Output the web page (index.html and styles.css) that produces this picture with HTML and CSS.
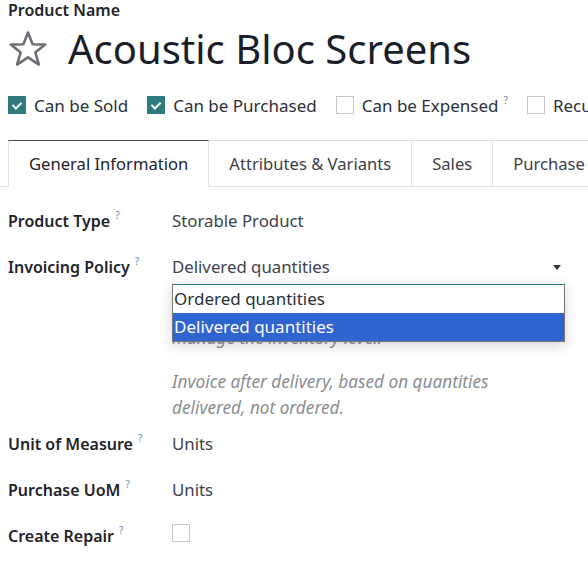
FILE: index.html
```html
<!DOCTYPE html>
<html lang="en">
<head>
    <meta charset="UTF-8">
    <meta name="viewport" content="width=device-width, initial-scale=1.0">
    <title>Acoustic Bloc Screens</title>
    <link rel="stylesheet" href="styles.css">
</head>
<body>
    <div class="sheet">
        <div class="title-block">
            <label class="name-label">Product Name</label>
            <div class="title-row">
                <svg class="star" width="40" height="38" viewBox="0 0 40 38">
                    <polygon points="20,2.5 24.6,14.2 37.2,14.6 27.3,22.4 30.9,34.6 20,27.4 9.1,34.6 12.7,22.4 2.8,14.6 15.4,14.2"
                             fill="none" stroke="#6c6f75" stroke-width="2.6" stroke-linejoin="round"/>
                </svg>
                <h1>Acoustic Bloc Screens</h1>
            </div>
        </div>

        <div class="options">
            <span class="opt"><span class="box checked"></span><span>Can be Sold</span></span>
            <span class="opt"><span class="box checked"></span><span>Can be Purchased</span></span>
            <span class="opt"><span class="box"></span><span>Can be Expensed<sup>?</sup></span></span>
            <span class="opt"><span class="box"></span><span>Recurring</span></span>
        </div>

        <ul class="tabs">
            <li class="active">General Information</li>
            <li>Attributes &amp; Variants</li>
            <li>Sales</li>
            <li>Purchase</li>
            <li>Inventory</li>
        </ul>

        <div class="form">
            <div class="field">
                <div class="label">Product Type<sup>?</sup></div>
                <div class="value">Storable Product</div>
            </div>
            <div class="field with-help">
                <div class="label">Invoicing Policy<sup>?</sup></div>
                <div class="value">
                    <div class="select">
                        <span>Delivered quantities</span>
                        <span class="caret"></span>
                        <ul class="listbox">
                            <li>Ordered quantities</li>
                            <li class="hl">Delivered quantities</li>
                        </ul>
                    </div>
                    <p class="help">Storable products are items for which you<br>manage the inventory level.</p>
                    <p class="help">Invoice after delivery, based on quantities delivered, not ordered.</p>
                </div>
            </div>
            <div class="field">
                <div class="label">Unit of Measure<sup>?</sup></div>
                <div class="value">Units</div>
            </div>
            <div class="field">
                <div class="label">Purchase UoM<sup>?</sup></div>
                <div class="value">Units</div>
            </div>
            <div class="field">
                <div class="label">Create Repair<sup>?</sup></div>
                <div class="value"><span class="box"></span></div>
            </div>
        </div>
    </div>
</body>
</html>
```

FILE: styles.css
```css
body {
    margin: 0;
    background: #fff;
    color: #1f232b;
    font-family: 'Noto Sans', 'Open Sans', sans-serif;
    font-size: 15px;
    overflow: hidden;
}
.sheet {
    width: 720px;
}
.title-block {
    padding: 0 8px;
}
.name-label {
    display: block;
    font-weight: 600;
    font-size: 16px;
    line-height: 20px;
}
.title-row {
    display: flex;
    align-items: center;
    gap: 20px;
    height: 57px;
}
.title-row h1 {
    margin: 0;
    font-weight: 400;
    font-size: 40px;
    color: #1b1f2a;
}
.star {
    flex: none;
}
.options {
    display: flex;
    align-items: center;
    gap: 19px;
    padding: 17px 8px 0;
    height: 22px;
    font-size: 17px;
    color: #2b2f38;
}
.opt {
    display: flex;
    align-items: center;
    gap: 8px;
    white-space: nowrap;
}
.box {
    display: inline-block;
    width: 16px;
    height: 16px;
    border: 1px solid #c4c6c9;
    background: #fff;
    box-sizing: content-box;
}
.box.checked {
    border-color: #2e7a7e;
    background: #2e7a7e;
    position: relative;
}
.box.checked::after {
    content: '';
    position: absolute;
    left: 5px;
    top: 3px;
    width: 4px;
    height: 7px;
    border: solid #fff;
    border-width: 0 2px 2px 0;
    transform: rotate(45deg);
}
sup {
    position: relative;
    top: -8px;
    vertical-align: baseline;
    font-size: 10px;
    font-weight: 400;
    color: #5f8fb8;
    margin-left: 5px;
    line-height: 0;
}
.tabs {
    display: flex;
    list-style: none;
    margin: 24px 0 0;
    padding: 0 0 0 8px;
    border-bottom: 1px solid #dee2e6;
    height: 46px;
}
.tabs li {
    padding: 0 20px;
    line-height: 46px;
    border-top: 1px solid #dee2e6;
    border-right: 1px solid #dee2e6;
    font-size: 16.6px;
    color: #3a3f48;
    white-space: nowrap;
}
.tabs li.active {
    border: 1px solid #dee2e6;
    border-top-color: #4a4550;
    border-bottom: 1px solid #fff;
    margin-bottom: -1px;
    color: #1f232b;
}
.form {
    padding: 22px 8px 0;
}
.field {
    display: grid;
    grid-template-columns: 164px 1fr;
    margin-bottom: 22px;
}
.field.with-help {
    margin-bottom: 11px;
}
.label {
    font-weight: 600;
    font-size: 16px;
    line-height: 24px;
}
.value {
    line-height: 24px;
    font-size: 16.8px;
    color: #3d424b;
}
.select {
    position: relative;
    display: flex;
    justify-content: space-between;
    align-items: center;
    width: 392px;
    height: 24px;
}
.caret {
    width: 0;
    height: 0;
    border-left: 4px solid transparent;
    border-right: 4px solid transparent;
    border-top: 5px solid #333;
    margin-right: 3px;
}
.listbox {
    position: absolute;
    left: 0;
    top: 29px;
    width: 391px;
    margin: 0;
    padding: 0;
    list-style: none;
    background: #fff;
    border: 1px solid #767676;
    border-top: 1px solid #2e7a7e;
    box-shadow: 0 3px 12px rgba(0, 0, 0, 0.18);
    z-index: 2;
}
.listbox li {
    height: 28px;
    line-height: 28px;
    padding-left: 1px;
    font-size: 17px;
    color: #2a2e36;
}
.listbox li.hl {
    background: #3064d0;
    color: #fff;
}
.help {
    margin: 20px 0 0;
    width: 350px;
    font-size: 17.2px;
    font-style: italic;
    color: #8a8d92;
    line-height: 26px;
}
.help + .help {
    margin-top: 18px;
}
```
